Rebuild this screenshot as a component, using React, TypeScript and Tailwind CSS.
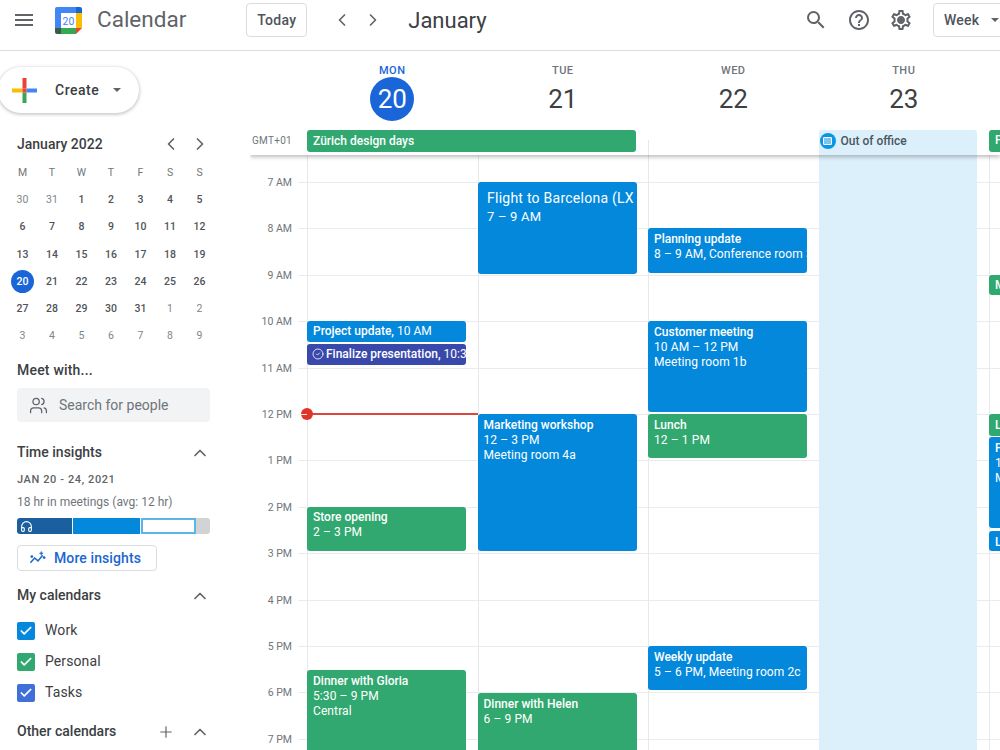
import { ChevronLeft, ChevronRight, ChevronUp, Users, Plus, Headphones, Check, CircleCheck } from "lucide-react";

const HOUR = 46.4;
const GRID_OFFSET = 27;
const hours = ["7 AM", "8 AM", "9 AM", "10 AM", "11 AM", "12 PM", "1 PM", "2 PM", "3 PM", "4 PM", "5 PM", "6 PM", "7 PM"];
const days = [
  { name: "MON", num: "20", active: true },
  { name: "TUE", num: "21" },
  { name: "WED", num: "22" },
  { name: "THU", num: "23" },
  { name: "", num: "" },
];

type CalEvent = {
  title: string;
  lines?: string[];
  start: number;
  end: number;
  color: string;
  big?: boolean;
  task?: boolean;
  inline?: boolean;
};

const BLUE = "bg-[#0388dc]";
const GREEN = "bg-[#31a86f]";
const INDIGO = "bg-[#3949ab]";

const columns: CalEvent[][] = [
  [
    { title: "Project update,", lines: ["10 AM"], start: 10, end: 10.45, color: BLUE, inline: true },
    { title: "Finalize presentation,", lines: ["10:30 AM"], start: 10.5, end: 10.94, color: INDIGO, inline: true, task: true },
    { title: "Store opening", lines: ["2 – 3 PM"], start: 14, end: 14.95, color: GREEN },
    { title: "Dinner with Gloria", lines: ["5:30 – 9 PM", "Central"], start: 17.52, end: 21, color: GREEN },
  ],
  [
    { title: "Flight to Barcelona (LX 1952)", lines: ["7 – 9 AM"], start: 7, end: 8.98, color: BLUE, big: true },
    { title: "Marketing workshop", lines: ["12 – 3 PM", "Meeting room 4a"], start: 12, end: 14.95, color: BLUE },
    { title: "Dinner with Helen", lines: ["6 – 9 PM"], start: 18.02, end: 21, color: GREEN },
  ],
  [
    { title: "Planning update", lines: ["8 – 9 AM, Conference room 3"], start: 8, end: 8.97, color: BLUE },
    { title: "Customer meeting", lines: ["10 AM – 12 PM", "Meeting room 1b"], start: 10, end: 11.96, color: BLUE },
    { title: "Lunch", lines: ["12 – 1 PM"], start: 12, end: 12.95, color: GREEN },
    { title: "Weekly update", lines: ["5 – 6 PM, Meeting room 2c"], start: 17, end: 17.95, color: BLUE },
  ],
  [],
  [
    { title: "Marketing", start: 9, end: 9.44, color: GREEN },
    { title: "Lunch", start: 12, end: 12.47, color: GREEN },
    { title: "Project", lines: ["12 – 2 PM", "Meeting"], start: 12.5, end: 14.46, color: BLUE },
    { title: "Lunch", start: 14.53, end: 14.96, color: BLUE },
  ],
];

const miniWeeks = [
  ["30", "31", "1", "2", "3", "4", "5"],
  ["6", "7", "8", "9", "10", "11", "12"],
  ["13", "14", "15", "16", "17", "18", "19"],
  ["20", "21", "22", "23", "24", "25", "26"],
  ["27", "28", "29", "30", "31", "1", "2"],
  ["3", "4", "5", "6", "7", "8", "9"],
];

function isMuted(week: number, day: number) {
  return (week === 0 && day < 2) || (week === 4 && day > 4) || week === 5;
}

function Logo() {
  return (
    <svg viewBox="0 0 27 27" className="h-[27px] w-[27px] shrink-0">
      <path d="M2 0h19v6H6v15H0V2a2 2 0 0 1 2-2z" fill="#4285f4" />
      <path d="M21 0h4a2 2 0 0 1 2 2v4h-6z" fill="#1967d2" />
      <rect x="21" y="6" width="6" height="15" fill="#fbbc04" />
      <rect x="6" y="21" width="15" height="6" fill="#34a853" />
      <path d="M0 21h6v6H2a2 2 0 0 1-2-2z" fill="#3c5a4a" />
      <path d="M21 21h6l-6 6z" fill="#ea4335" />
      <rect x="6" y="6" width="15" height="15" fill="#fff" />
      <text x="13.5" y="17.5" textAnchor="middle" fontSize="10.5" fontFamily="Roboto, sans-serif" fill="#4285f4">20</text>
    </svg>
  );
}

function MaterialIcon({ d, children }: { d: string; children?: React.ReactNode }) {
  return (
    <svg viewBox="0 0 24 24" className="h-[24px] w-[24px] shrink-0" fill="#5f6368">
      <path d={d} />
      {children}
    </svg>
  );
}

const MENU_PATH = "M3 18h18v-2H3v2zm0-5h18v-2H3v2zm0-7v2h18V6H3z";
const SEARCH_PATH = "M15.5 14h-.79l-.28-.27A6.471 6.471 0 0 0 16 9.5 6.5 6.5 0 1 0 9.5 16c1.61 0 3.09-.59 4.23-1.57l.27.28v.79l5 4.99L20.49 19l-4.99-5zm-6 0C7.01 14 5 11.99 5 9.5S7.01 5 9.5 5 14 7.01 14 9.5 11.99 14 9.5 14z";
const HELP_PATH = "M11 18h2v-2h-2v2zm1-16C6.48 2 2 6.48 2 12s4.48 10 10 10 10-4.48 10-10S17.52 2 12 2zm0 18c-4.41 0-8-3.59-8-8s3.59-8 8-8 8 3.59 8 8-3.59 8-8 8zm0-14c-2.21 0-4 1.79-4 4h2c0-1.1.9-2 2-2s2 .9 2 2c0 2-3 1.75-3 5h2c0-2.25 3-2.5 3-5 0-2.21-1.79-4-4-4z";
const GEAR_PATH = "M19.43 12.98c.04-.32.07-.64.07-.98 0-.34-.03-.66-.07-.98l2.11-1.65c.19-.15.24-.42.12-.64l-2-3.46c-.09-.16-.26-.25-.44-.25-.06 0-.12.01-.17.03l-2.49 1c-.52-.4-1.08-.73-1.69-.98l-.38-2.65C14.46 2.18 14.25 2 14 2h-4c-.25 0-.46.18-.49.42l-.38 2.65c-.61.25-1.17.59-1.69.98l-2.49-1c-.06-.02-.12-.03-.18-.03-.17 0-.34.09-.43.25l-2 3.46c-.13.22-.07.49.12.64l2.11 1.65c-.04.32-.07.65-.07.98 0 .33.03.66.07.98l-2.11 1.65c-.19.15-.24.42-.12.64l2 3.46c.09.16.26.25.44.25.06 0 .12-.01.17-.03l2.49-1c.52.4 1.08.73 1.69.98l.38 2.65c.03.24.24.42.49.42h4c.25 0 .46-.18.49-.42l.38-2.65c.61-.25 1.17-.59 1.69-.98l2.49 1c.06.02.12.03.18.03.17 0 .34-.09.43-.25l2-3.46c.12-.22.07-.49-.12-.64l-2.11-1.65zm-1.98-1.71c.04.31.05.52.05.73 0 .21-.02.43-.05.73l-.14 1.13.89.7 1.08.84-.7 1.21-1.27-.51-1.04-.42-.9.68c-.43.32-.84.56-1.25.73l-1.06.43-.16 1.13-.2 1.35h-1.4l-.19-1.35-.16-1.13-1.06-.43c-.43-.18-.83-.41-1.23-.71l-.91-.7-1.06.43-1.27.51-.7-1.21 1.08-.84.89-.7-.14-1.13c-.03-.31-.05-.54-.05-.74s.02-.43.05-.73l.14-1.13-.89-.7-1.08-.84.7-1.21 1.27.51 1.04.42.9-.68c.43-.32.84-.56 1.25-.73l1.06-.43.16-1.13.2-1.35h1.39l.19 1.35.16 1.13 1.06.43c.43.18.83.41 1.23.71l.91.7 1.06-.43 1.27-.51.7 1.21-1.07.85-.89.7.14 1.13zM12 8c-2.21 0-4 1.79-4 4s1.79 4 4 4 4-1.79 4-4-1.79-4-4-4zm0 6c-1.1 0-2-.9-2-2s.9-2 2-2 2 .9 2 2-.9 2-2 2z";

function ColorPlus() {
  return (
    <svg viewBox="0 0 25 25" className="h-[25px] w-[25px] shrink-0">
      <rect x="10.5" y="0" width="4" height="10.5" fill="#ea4335" />
      <rect x="14.5" y="10.5" width="10.5" height="4" fill="#4285f4" />
      <rect x="10.5" y="14.5" width="4" height="10.5" fill="#34a853" />
      <rect x="0" y="10.5" width="10.5" height="4" fill="#fbbc04" />
      <rect x="10.5" y="10.5" width="4" height="4" fill="#ea4335" />
    </svg>
  );
}

function InsightsIcon() {
  return (
    <svg viewBox="0 0 18 18" className="h-[17px] w-[17px]" fill="none" stroke="#1a66d2" strokeWidth="1.6">
      <path d="M1.5 13.5 6 8.5l3.5 3L14.5 5.5" />
      <path d="M13 1.5l.6 1.4 1.4.6-1.4.6-.6 1.4-.6-1.4-1.4-.6 1.4-.6z" fill="#1a66d2" strokeWidth="0.5" />
      <circle cx="16" cy="8" r="0.7" fill="#1a66d2" />
      <circle cx="3" cy="7" r="0.7" fill="#1a66d2" />
    </svg>
  );
}

function Caret({ className = "" }: { className?: string }) {
  return <span className={`block h-0 w-0 border-x-[4px] border-t-[4px] border-x-transparent border-t-[#5f6368] ${className}`} />;
}

function CalendarCheck({ color, label }: { color: string; label: string }) {
  return (
    <div className="flex h-[31px] items-center">
      <span className={`flex h-[18px] w-[18px] items-center justify-center rounded-[2px] ${color}`}>
        <Check size={14} strokeWidth={3} className="text-white" />
      </span>
      <span className="ml-[10px] text-[14px] tracking-[0.1px] text-[#3c4043]">{label}</span>
    </div>
  );
}

function SectionHead({ title }: { title: string }) {
  return (
    <div className="flex items-center justify-between">
      <span className="text-[14px] font-medium text-[#3c4043]">{title}</span>
      <ChevronUp size={20} strokeWidth={2} className="text-[#5f6368]" />
    </div>
  );
}

function Sidebar() {
  return (
    <aside className="w-[250px] shrink-0 pl-[17px] pt-[16px]">
      <button className="-ml-[19px] flex h-[46px] w-[141px] items-center rounded-full bg-white pl-[14px] shadow-[0_1px_3px_1px_rgba(60,64,67,0.25)]">
        <ColorPlus />
        <span className="ml-[18px] text-[14px] font-medium tracking-[0.5px] text-[#3c4043]">Create</span>
        <Caret className="ml-[14px]" />
      </button>

      <div className="mt-[21px] w-[193px]">
        <div className="flex h-[20px] items-center justify-between">
          <span className="text-[14px] font-medium text-[#3c4043]">January 2022</span>
          <div className="flex gap-[9px] text-[#5f6368]">
            <ChevronLeft size={20} strokeWidth={2} />
            <ChevronRight size={20} strokeWidth={2} />
          </div>
        </div>
        <div className="-ml-[9.25px] mt-[5px] grid w-[206.5px] grid-cols-7 text-center text-[10.5px] leading-[27.2px]">
          {["M", "T", "W", "T", "F", "S", "S"].map((d, i) => (
            <span key={i} className="text-[#70757a]">{d}</span>
          ))}
          {miniWeeks.map((week, w) =>
            week.map((d, i) =>
              w === 3 && i === 0 ? (
                <span key={`${w}-${i}`} className="flex h-[27.2px] items-center justify-center">
                  <span className="flex h-[23px] w-[23px] items-center justify-center rounded-full bg-[#1a66d8] font-medium text-white">{d}</span>
                </span>
              ) : (
                <span key={`${w}-${i}`} className={isMuted(w, i) ? "text-[#80868b]" : "font-medium text-[#50545a]"}>{d}</span>
              )
            )
          )}
        </div>
      </div>

      <div className="mt-[11px] text-[14px] font-medium leading-[20px] tracking-[0.2px] text-[#3c4043]">Meet with...</div>
      <div className="mt-[8px] flex h-[34px] w-[193px] items-center rounded-[4px] bg-[#f1f3f4] pl-[12px] text-[#5f6368]">
        <Users size={19} strokeWidth={1.6} />
        <span className="ml-[11px] text-[14px] text-[#70757a]">Search for people</span>
      </div>

      <div className="mt-[20px] w-[193px]">
        <SectionHead title="Time insights" />
        <div className="mt-[10px] text-[11px] font-medium leading-[14px] tracking-[0.6px] text-[#5f6368]">JAN 20 - 24, 2021</div>
        <div className="mt-[7px] text-[12px] leading-[16px] text-[#70757a]">18 hr in meetings (avg: 12 hr)</div>
        <div className="mt-[8px] flex h-[16px] overflow-hidden rounded-[3px]">
          <div className="flex w-[55px] items-center bg-[#1b5f9e] pl-[3px]">
            <Headphones size={13} strokeWidth={2} className="text-white" />
          </div>
          <div className="ml-[1px] w-[67px] bg-[#0388dc]" />
          <div className="ml-[1px] w-[55px] border-2 border-[#5bb5ea] bg-white" />
          <div className="flex-1 bg-[#d2d3d5]" />
        </div>
        <button className="mt-[11px] flex h-[26px] w-[140px] items-center rounded-[4px] border border-[#dadce0] pl-[11px]">
          <InsightsIcon />
          <span className="ml-[8px] text-[14px] font-medium tracking-[0.1px] text-[#1a66d2]">More insights</span>
        </button>
      </div>

      <div className="mt-[14px] w-[193px]">
        <SectionHead title="My calendars" />
        <div className="mt-[9px]">
          <CalendarCheck color="bg-[#0388dc]" label="Work" />
          <CalendarCheck color="bg-[#31a86f]" label="Personal" />
          <CalendarCheck color="bg-[#3f6fd8]" label="Tasks" />
        </div>
      </div>

      <div className="mt-[13px] flex w-[193px] items-center">
        <span className="text-[14px] font-medium text-[#3c4043]">Other calendars</span>
        <Plus size={18} strokeWidth={1.6} className="ml-auto text-[#5f6368]" />
        <ChevronUp size={20} strokeWidth={2} className="ml-[15px] text-[#5f6368]" />
      </div>
    </aside>
  );
}

function EventCard({ ev }: { ev: CalEvent }) {
  const top = (ev.start - 7) * HOUR + GRID_OFFSET;
  const height = (ev.end - ev.start) * HOUR;
  return (
    <div
      className={`absolute -left-px w-[159px] overflow-hidden rounded-[3px] text-white ${ev.color} ${ev.big ? "pl-[9.5px] pt-[6px]" : ev.inline ? "pl-[6px] pt-[2px]" : "pl-[6px] pt-[2.5px]"}`}
      style={{ top, height }}
    >
      {ev.inline ? (
        <div className="flex items-center whitespace-nowrap text-[12px] leading-[16px]">
          {ev.task && <CircleCheck size={12} strokeWidth={2} className="-ml-px mr-[2px] shrink-0 text-white/80" />}
          <span className="font-medium">{ev.title}</span>
          <span className="ml-[3px]">{ev.lines?.[0]}</span>
        </div>
      ) : (
        <>
          <div className={`whitespace-nowrap ${ev.big ? "text-[14px] leading-[20px] tracking-[0.25px]" : "text-[12px] font-medium leading-[16px]"}`}>{ev.title}</div>
          {ev.lines?.map((line) => (
            <div key={line} className={`whitespace-nowrap ${ev.big ? "text-[13px] leading-[18px] tracking-[0.2px]" : "text-[12px] leading-[15.5px] tracking-[0.1px]"}`}>{line}</div>
          ))}
        </>
      )}
    </div>
  );
}

export default function App() {
  return (
    <div className="flex h-[750px] w-[1000px] flex-col overflow-hidden bg-white font-['Roboto',sans-serif]">
      <header className="flex h-[51px] shrink-0 items-center border-b border-[#dadce0] pb-[10px]">
        <span className="ml-[12px]"><MaterialIcon d={MENU_PATH} /></span>
        <span className="ml-[19px]"><Logo /></span>
        <span className="ml-[15px] text-[22.5px] text-[#5f6368]">Calendar</span>
        <button className="ml-[60px] h-[34px] w-[61px] rounded-[4px] border border-[#dadce0] text-[14px] font-medium tracking-[0.3px] text-[#50545a]">Today</button>
        <ChevronLeft size={20} strokeWidth={2} className="ml-[25px] text-[#5f6368]" />
        <ChevronRight size={20} strokeWidth={2} className="ml-[11px] text-[#5f6368]" />
        <span className="ml-[25px] text-[22px] text-[#3c4043]">January</span>
        <span className="ml-auto"><MaterialIcon d={SEARCH_PATH} /></span>
        <span className="ml-[19px]"><MaterialIcon d={HELP_PATH} /></span>
        <span className="ml-[18px]">
          <MaterialIcon d={GEAR_PATH}>
            <circle cx="12" cy="12" r="2.2" />
          </MaterialIcon>
        </span>
        <button className="-mr-[10px] ml-[20px] flex h-[34px] w-[77px] shrink-0 items-center rounded-l-[4px] border border-[#dadce0] pl-[10px] text-[14px] font-medium tracking-[0.2px] text-[#50545a]">
          Week
          <Caret className="ml-[12px]" />
        </button>
      </header>

      <div className="flex min-h-0 flex-1">
        <Sidebar />
        <main className="flex min-w-0 flex-1 flex-col overflow-hidden">
          <div className="relative z-10 flex h-[104px] shrink-0 bg-white shadow-[0_2px_4px_rgba(60,64,67,0.35)]">
            <div className="flex w-[57px] shrink-0 items-end justify-end pb-[7px] pr-[15px] text-[10px] tracking-[0.3px] text-[#70757a]">GMT+01</div>
            {days.map((day, i) => (
              <div key={i} className="flex w-[170.5px] shrink-0 flex-col">
                <div className="flex h-[79px] flex-col items-center pt-[13px]">
                  <span className={`text-[11px] font-medium leading-[13px] tracking-[0.5px] ${day.active ? "text-[#1a66d8]" : "text-[#70757a]"}`}>{day.name}</span>
                  {day.active ? (
                    <span className="flex h-[44px] w-[44px] items-center justify-center rounded-full bg-[#1a66d8] text-[26px] text-white">{day.num}</span>
                  ) : (
                    <span className="flex h-[44px] items-center text-[26px] text-[#3c4043]">{day.num}</span>
                  )}
                </div>
                {i === 2 && <div className="mt-[10px] h-[15px] border-l border-[#e6e8ea]" />}
                {i === 3 && (
                  <div className="flex h-[25px] w-[158px] items-start rounded-t-[3px] bg-[#dcf0fb] pl-[1px] pt-[3px]">
                    <span className="flex h-[16px] w-[16px] items-center justify-center rounded-full bg-[#0a96e6]">
                      <span className="h-[8px] w-[9px] rounded-[1px] border border-white bg-[#7cc5f0]" />
                    </span>
                    <span className="ml-[5px] text-[12px] font-medium leading-[16px] text-[#4a5560]">Out of office</span>
                  </div>
                )}
                {i === 4 && (
                  <div className="h-[22px] w-[40px] rounded-[3px] bg-[#31a86f] pl-[6px] text-[12px] font-medium leading-[21px] text-white">P</div>
                )}
              </div>
            ))}
            {/* multi-day banner sits over the Mon and Tue columns */}
            <div className="absolute left-[57px] top-[79px] h-[22px] w-[329px] rounded-[3px] bg-[#31a86f] pl-[6px] text-[12px] font-medium leading-[22px] text-white">Zürich design days</div>
          </div>

          <div className="relative flex min-h-0 flex-1">
            <div className="relative w-[57px] shrink-0 text-right text-[10.5px] text-[#70757a]">
              {hours.map((h, i) => (
                <div key={h} className="absolute right-[15px]" style={{ top: i * HOUR + GRID_OFFSET - 7 }}>{h}</div>
              ))}
            </div>
            {columns.map((col, i) => (
              <div key={i} className="relative h-full w-[170.5px] shrink-0 border-l border-[#e6e8ea]">
                {hours.map((h, r) => (
                  <div key={h} className="absolute inset-x-0 border-t border-[#e9ebed]" style={{ top: r * HOUR + GRID_OFFSET }} />
                ))}
                {i === 3 && <div className="absolute bottom-0 -left-px top-0 w-[158px] bg-[#dcf0fb]" />}
                {col.map((ev) => <EventCard key={ev.title + ev.start} ev={ev} />)}
                {i === 0 && (
                  <div className="absolute -left-px w-[170.5px] border-t-2 border-[#d9483b]" style={{ top: 5 * HOUR + GRID_OFFSET - 1 }}>
                    <span className="absolute -left-[6px] -top-[7px] h-[12px] w-[12px] rounded-full bg-[#e0352b]" />
                  </div>
                )}
              </div>
            ))}
            {/* hour ticks running from the gutter into the first column */}
            {hours.map((h, r) => (
              <div key={h} className="absolute left-[48px] w-[9px] border-t border-[#e9ebed]" style={{ top: r * HOUR + GRID_OFFSET }} />
            ))}
          </div>
        </main>
      </div>
    </div>
  );
}
